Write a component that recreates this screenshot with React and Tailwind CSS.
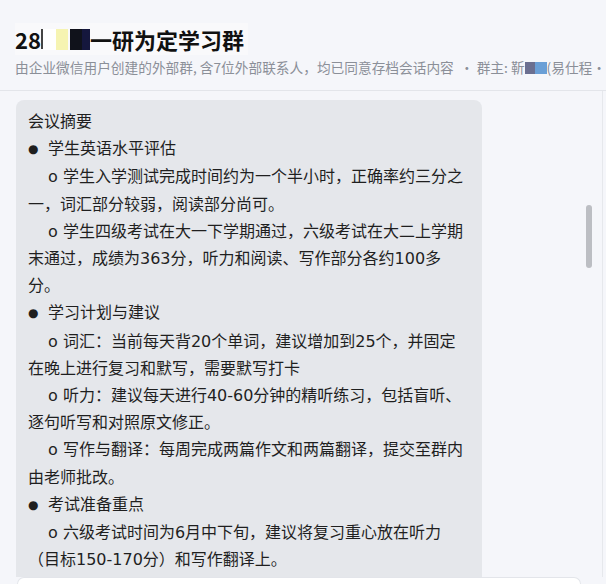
import React from "react";

const summary = [
  { type: "title", text: "会议摘要" },
  { type: "bullet", text: "学生英语水平评估" },
  { type: "sub", text: "学生入学测试完成时间约为一个半小时，正确率约三分之一，词汇部分较弱，阅读部分尚可。" },
  { type: "sub", text: "学生四级考试在大一下学期通过，六级考试在大二上学期末通过，成绩为363分，听力和阅读、写作部分各约100多分。" },
  { type: "bullet", text: "学习计划与建议" },
  { type: "sub", text: "词汇：当前每天背20个单词，建议增加到25个，并固定在晚上进行复习和默写，需要默写打卡" },
  { type: "sub", text: "听力：建议每天进行40-60分钟的精听练习，包括盲听、逐句听写和对照原文修正。" },
  { type: "sub", text: "写作与翻译：每周完成两篇作文和两篇翻译，提交至群内由老师批改。" },
  { type: "bullet", text: "考试准备重点" },
  { type: "sub", text: "六级考试时间为6月中下旬，建议将复习重心放在听力（目标150-170分）和写作翻译上。" },
  { type: "sub", text: "建议背诵三篇范文以积累写作分数，今日行形成自己的写作模板。" },
];

const Line = ({ item }) => {
  if (item.type === "title") return <p>{item.text}</p>;
  if (item.type === "bullet")
    return (
      <p>
        <span className="inline-block w-[20px] text-[12px] align-[1px]">●</span>
        {item.text}
      </p>
    );
  return <p className="indent-[20px]">o {item.text}</p>;
};

export default function App() {
  return (
    <div
      className="h-[584px] w-[606px] overflow-hidden flex flex-col bg-[#f5f6fa] text-[#1f1f1f]"
      style={{ fontFamily: '"Noto Sans CJK SC", "Noto Sans", sans-serif' }}
    >
      <header className="h-[91px] border-b border-[#e3e5ea] px-[15px] pt-[23px] shrink-0">
        <h1 className="inline-flex items-center h-[32px] pr-[4px] bg-[#f9f9fb] text-[22px] font-bold leading-none text-[#111]">
          <span>28</span>
          <span className="inline-block w-[2px] h-[20px] bg-[#444]" />
          <span className="inline-block w-[13px] h-[21px] bg-white" />
          <span className="inline-block w-[12px] h-[21px] bg-[#f6f4b2]" />
          <span className="inline-block w-[2px] h-[21px]" />
          <span className="inline-block w-[12px] h-[21px] bg-[#10121b]" />
          <span className="inline-block w-[8px] h-[21px] bg-[#15173d]" />
          <span>一研为定学习群</span>
        </h1>
        <p className="mt-[2px] text-[13.7px] leading-[20px] text-[#8b8f98] whitespace-nowrap">
          由企业微信用户创建的外部群, 含7位外部联系人，均已同意存档会话内容 &nbsp;· 群主: 靳
          <span className="inline-block w-[10px] h-[12px] align-[-1px] bg-[#6b6f90]" />
          <span className="inline-block w-[12px] h-[12px] align-[-1px] bg-[#6a9fd6]" />
          (易仕程·学习顾问)
        </p>
      </header>

      <main className="relative flex-1 overflow-hidden mr-[3px] border-r border-[#e6e8ec]">
        <div
          className="ml-4 mt-[9px] w-[466px] rounded-lg bg-[#e5e7eb] px-3 pt-2 pb-3 text-[16px] leading-[27.2px]"
          style={{ fontFamily: '"DejaVu Sans", "Noto Sans CJK SC", sans-serif' }}
        >
          {summary.map((item, i) => (
            <Line key={i} item={item} />
          ))}
        </div>
        <div className="absolute right-[10px] top-[114px] w-[6px] h-[63px] rounded-full bg-[#bcbec3]" />
      </main>

      <footer className="h-[7px] shrink-0 pl-[17px] pr-[25px]">
        <div className="h-full rounded-t-lg border border-b-0 border-[#e3e5ea] bg-white" />
      </footer>
    </div>
  );
}
